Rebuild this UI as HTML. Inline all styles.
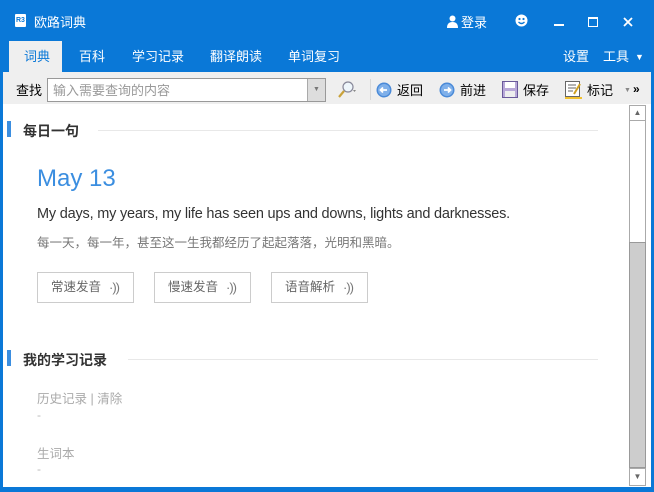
<!DOCTYPE html>
<html><head><meta charset="utf-8"><style>
*{margin:0;padding:0;box-sizing:border-box}
body{width:654px;height:492px;overflow:hidden;background:#0a78d7;font-family:"Liberation Sans","Noto Sans CJK SC",sans-serif;position:relative}
.a{position:absolute;line-height:1}
.w{color:#fff;font-size:13px}
.tab{position:absolute;top:50px;color:#fff;font-size:13px;line-height:1}
.btn{position:absolute;top:272px;height:31px;border:1px solid #ccc;background:#fff;color:#666;font-size:12.5px;line-height:29px;padding-left:13px}
.btn span{position:absolute;right:14px;top:0;color:#777;font-size:13px;letter-spacing:-1px}
</style></head><body>
<div class="a" style="left:15px;top:14px;width:11px;height:13px;background:#fff;border-radius:1px"></div>
<div class="a" style="left:16px;top:17px;font-size:7px;color:#0a78d7;font-weight:bold">R3</div>
<div class="a w" style="left:34px;top:16px">欧路词典</div>
<svg class="a" style="left:447px;top:15px" width="11" height="13"><circle cx="5.5" cy="3.5" r="3" fill="#fff"/><path d="M0 13 Q0 7 5.5 7 Q11 7 11 13Z" fill="#fff"/></svg>
<div class="a w" style="left:461px;top:16px">登录</div>
<svg class="a" style="left:515px;top:14px" width="13" height="13"><circle cx="6.5" cy="6.5" r="6" fill="#fff"/><circle cx="4.5" cy="5" r="1.1" fill="#0a78d7"/><circle cx="8.5" cy="5" r="1.1" fill="#0a78d7"/><path d="M3.5 8 Q6.5 11 9.5 8" stroke="#0a78d7" stroke-width="1.3" fill="none"/></svg>
<div class="a" style="left:554px;top:24px;width:10px;height:2px;background:#fff"></div>
<div class="a" style="left:588px;top:17px;width:10px;height:10px;border:1.5px solid #fff;border-top-width:2.5px"></div>
<svg class="a" style="left:623px;top:17px" width="10" height="10"><path d="M1 1L9 9M9 1L1 9" stroke="#fff" stroke-width="1.8"/></svg>
<div class="a" style="left:9px;top:41px;width:53px;height:31px;background:#efefef"></div>
<div class="tab" style="left:24px;color:#0a78d7">词典</div>
<div class="tab" style="left:79px">百科</div>
<div class="tab" style="left:132px">学习记录</div>
<div class="tab" style="left:210px">翻译朗读</div>
<div class="tab" style="left:288px">单词复习</div>
<div class="tab" style="left:563px">设置</div>
<div class="tab" style="left:603px">工具</div>
<div class="tab" style="left:635px;font-size:9px;top:53px">▼</div>
<div class="a" style="left:3px;top:72px;width:648px;height:32px;background:#efefef"></div>
<div class="a" style="left:16px;top:84px;font-size:13px;color:#000">查找</div>
<div class="a" style="left:47px;top:78px;width:279px;height:24px;border:1px solid #999;background:#fff"></div>
<div class="a" style="left:53px;top:84px;font-size:13px;color:#999">输入需要查询的内容</div>
<div class="a" style="left:307px;top:79px;width:18px;height:22px;background:#ddd;border-left:1px solid #aaa;color:#777;font-size:7px;text-align:center;line-height:22px">▼</div>
<svg class="a" style="left:338px;top:81px" width="20" height="18"><circle cx="10" cy="6" r="5" fill="#eef6fb" stroke="#889" stroke-width="1.2"/><path d="M6 10L1 16" stroke="#c9a23a" stroke-width="2.2"/><path d="M15 9l3 0l-1.5 2z" fill="#888"/></svg>
<div class="a" style="left:370px;top:79px;width:1px;height:21px;background:#d8d8d8"></div>
<svg class="a" style="left:376px;top:82px" width="16" height="16"><circle cx="8" cy="8" r="7.5" fill="#4a8ad8"/><circle cx="8" cy="8" r="6" fill="#7fb0ea"/><path d="M11 8H5M7 5.5L4.5 8L7 10.5" stroke="#fff" stroke-width="1.8" fill="none"/></svg>
<div class="a" style="left:397px;top:84px;font-size:13px">返回</div>
<svg class="a" style="left:439px;top:82px" width="16" height="16"><circle cx="8" cy="8" r="7.5" fill="#4a8ad8"/><circle cx="8" cy="8" r="6" fill="#7fb0ea"/><path d="M5 8H11M9 5.5L11.5 8L9 10.5" stroke="#fff" stroke-width="1.8" fill="none"/></svg>
<div class="a" style="left:460px;top:84px;font-size:13px">前进</div>
<svg class="a" style="left:502px;top:81px" width="16" height="17"><rect x="0.5" y="0.5" width="15" height="16" fill="#b8a8d8" stroke="#6a5a9a"/><rect x="3" y="1" width="10" height="6" fill="#fff"/><rect x="3" y="10" width="10" height="6" fill="#eee"/></svg>
<div class="a" style="left:523px;top:84px;font-size:13px">保存</div>
<svg class="a" style="left:565px;top:81px" width="17" height="18"><rect x="0.5" y="0.5" width="14" height="15" fill="#fff" stroke="#666"/><path d="M3 4h8M3 7h8M3 10h5" stroke="#666"/><path d="M0 16h17v2H0z" fill="#f0c030"/><path d="M9 13L15 3" stroke="#d0a020" stroke-width="2"/></svg>
<div class="a" style="left:587px;top:84px;font-size:13px">标记</div>
<div class="a" style="left:624px;top:87px;font-size:7px;color:#888">▼</div>
<div class="a" style="left:633px;top:83px;font-size:12px;font-weight:bold">»</div>
<div class="a" style="left:3px;top:104px;width:648px;height:383px;background:#fff"></div>
<div class="a" style="left:629px;top:105px;width:17px;height:381px;background:#fff;border:1px solid #aaa"></div>
<div class="a" style="left:629px;top:105px;width:17px;height:16px;border:1px solid #aaa;color:#666;font-size:8px;text-align:center;line-height:14px">▲</div>
<div class="a" style="left:629px;top:242px;width:17px;height:226px;background:#cdcdcd;border:1px solid #999"></div>
<div class="a" style="left:629px;top:468px;width:17px;height:18px;border:1px solid #aaa;color:#666;font-size:8px;text-align:center;line-height:16px">▼</div>
<div class="a" style="left:7px;top:121px;width:4px;height:16px;background:#3b8ee0"></div>
<div class="a" style="left:23px;top:124px;font-size:14px;font-weight:bold;color:#333">每日一句</div>
<div class="a" style="left:98px;top:130px;width:500px;height:1px;background:#e8e8e8"></div>
<div class="a" style="left:37px;top:167px;font-size:24px;color:#3b8ee0">May 13</div>
<div class="a" style="left:37px;top:207px;font-size:14.5px;color:#333;letter-spacing:-0.2px">My days, my years, my life has seen ups and downs, lights and darknesses.</div>
<div class="a" style="left:37px;top:237px;font-size:12.5px;color:#777">每一天，每一年，甚至这一生我都经历了起起落落，光明和黑暗。</div>
<div class="btn" style="left:37px;width:97px">常速发音<span>·))</span></div>
<div class="btn" style="left:154px;width:97px">慢速发音<span>·))</span></div>
<div class="btn" style="left:271px;width:97px">语音解析<span>·))</span></div>
<div class="a" style="left:7px;top:350px;width:4px;height:16px;background:#3b8ee0"></div>
<div class="a" style="left:23px;top:353px;font-size:14px;font-weight:bold;color:#333">我的学习记录</div>
<div class="a" style="left:128px;top:359px;width:470px;height:1px;background:#e8e8e8"></div>
<div class="a" style="left:37px;top:393px;font-size:12.5px;color:#aaa">历史记录 | 清除</div>
<div class="a" style="left:37px;top:409px;font-size:12px;color:#bbb">-</div>
<div class="a" style="left:37px;top:448px;font-size:12.5px;color:#aaa">生词本</div>
<div class="a" style="left:37px;top:463px;font-size:12px;color:#bbb">-</div>
</body></html>
